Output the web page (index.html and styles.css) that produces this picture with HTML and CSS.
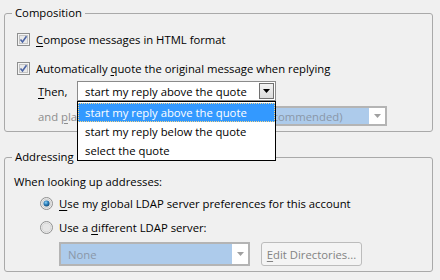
FILE: index.html
```html
<!DOCTYPE html>
<html>
    <head>
        <meta http-equiv="Content-Type" content="text/html; charset=utf-8"/>
        <link rel="stylesheet" href="styles.css">
    </head>
    <body>
        <div class="prefs">
            <fieldset class="group composition">
                <legend>Composition</legend>
                <div class="row check_row first_check">
                    <span class="checkbox">
                        <svg width="13" height="13" viewBox="0 0 13 13">
                            <rect x="0.5" y="0.5" width="12" height="12" fill="#f4f4f4" stroke="#8e8f8f"/>
                            <rect x="2.5" y="2.5" width="8" height="8" fill="#e9e9e9" stroke="#c3c3c3"/>
                            <path d="M3.5 6.5 L5.5 9 L9.5 3.2" fill="none" stroke="#4b64a4" stroke-width="1.6"/>
                        </svg>
                    </span>
                    <span><u>C</u>ompose messages in HTML format</span>
                </div>
                <div class="row check_row second_check">
                    <span class="checkbox">
                        <svg width="13" height="13" viewBox="0 0 13 13">
                            <rect x="0.5" y="0.5" width="12" height="12" fill="#f4f4f4" stroke="#8e8f8f"/>
                            <rect x="2.5" y="2.5" width="8" height="8" fill="#e9e9e9" stroke="#c3c3c3"/>
                            <path d="M3.5 6.5 L5.5 9 L9.5 3.2" fill="none" stroke="#4b64a4" stroke-width="1.6"/>
                        </svg>
                    </span>
                    <span>Automatically <u>q</u>uote the original message when replying</span>
                </div>
                <div class="row indent_row then_row">
                    <span class="then_label"><u>T</u>hen,</span>
                    <div class="select reply_select">
                        <span class="select_text">start my reply above the quote</span>
                        <span class="drop_btn">
                            <svg width="7" height="4" viewBox="0 0 7 4"><path d="M0 0 H7 L3.5 4 Z" fill="#000"/></svg>
                        </span>
                    </div>
                </div>
                <div class="row indent_row sig_row">
                    <span class="disabled_text">and <u>p</u>lace my signature</span>
                    <div class="select dim_select sig_select">
                        <span class="select_text">below my reply (recommended)</span>
                        <span class="dim_btn">
                            <svg width="7" height="4" viewBox="0 0 7 4"><path d="M0 0 H7 L3.5 4 Z" fill="#a0a0a0"/></svg>
                        </span>
                    </div>
                </div>
            </fieldset>

            <fieldset class="group addressing">
                <legend>Addressing</legend>
                <div class="row lookup_row">When looking up addresses:</div>
                <div class="row radio_row first_radio">
                    <span class="radio">
                        <svg width="13" height="13" viewBox="0 0 13 13">
                            <defs>
                                <radialGradient id="dot" cx="0.4" cy="0.35" r="0.7">
                                    <stop offset="0" stop-color="#8fd4f5"/>
                                    <stop offset="0.5" stop-color="#2a7dbb"/>
                                    <stop offset="1" stop-color="#12476f"/>
                                </radialGradient>
                            </defs>
                            <circle cx="6.5" cy="6.5" r="6" fill="#f2f2f2" stroke="#8e8f8f"/>
                            <circle cx="6.5" cy="6.5" r="4.5" fill="#e4e4e4" stroke="#cfcfcf"/>
                            <circle cx="6.5" cy="6.5" r="3" fill="url(#dot)"/>
                        </svg>
                    </span>
                    <span><u>U</u>se my global LDAP server preferences for this account</span>
                </div>
                <div class="row radio_row second_radio">
                    <span class="radio">
                        <svg width="13" height="13" viewBox="0 0 13 13">
                            <circle cx="6.5" cy="6.5" r="6" fill="#f2f2f2" stroke="#8e8f8f"/>
                            <circle cx="6.5" cy="6.5" r="4.5" fill="#e6e6e6" stroke="#d4d4d4"/>
                        </svg>
                    </span>
                    <span>Use a <u>d</u>ifferent LDAP server:</span>
                </div>
                <div class="row server_row">
                    <div class="select dim_select none_select">
                        <span class="select_text">None</span>
                        <span class="dim_btn">
                            <svg width="7" height="4" viewBox="0 0 7 4"><path d="M0 0 H7 L3.5 4 Z" fill="#a0a0a0"/></svg>
                        </span>
                    </div>
                    <div class="dim_button"><u>E</u>dit Directories...</div>
                </div>
            </fieldset>

            <div class="dropdown_list">
                <div class="option option_active">start my reply above the quote</div>
                <div class="option">start my reply below the quote</div>
                <div class="option">select the quote</div>
            </div>
        </div>
    </body>
</html>
```

FILE: styles.css
```css
html, body {
    margin: 0;
    padding: 0;
    background-color: #f0f0f0;
}

body {
    font-family: "Open Sans", "Noto Sans", sans-serif;
    font-size: 11.3px;
    color: #000;
    width: 440px;
    height: 280px;
    overflow: hidden;
}

u {
    text-decoration: underline;
    text-underline-offset: 2px;
}

.prefs {
    position: relative;
    padding-top: 5px;
}

.group {
    margin: 0 7px 0 4px;
    padding: 0 0 5px 7px;
    border: 1px solid #a9a9a9;
    border-radius: 3px;
    min-width: 0;
}

.group legend {
    padding: 0 3px;
    line-height: 16px;
    height: 16px;
}

.addressing {
    margin-top: 17px;
}

.row {
    display: flex;
    align-items: center;
    height: 20px;
}

/* composition rows */
.check_row {
    padding-left: 5px;
}
.first_check {
    margin-top: 8px;
}
.second_check {
    margin-top: 9px;
}
.checkbox {
    width: 13px;
    height: 13px;
    margin-right: 6px;
    display: flex;
}

.indent_row {
    padding-left: 26px;
}
.then_row {
    margin-top: 3px;
}
.sig_row {
    margin-top: 5px;
    margin-right: 45px;
}
.then_label {
    width: 39px;
}

.select {
    display: flex;
    align-items: center;
    box-sizing: border-box;
    height: 20px;
    background-color: #fff;
    border: 1px solid #8b8b8b;
}
.select_text {
    flex: 1;
    padding-left: 7px;
    white-space: nowrap;
    overflow: hidden;
}
.reply_select {
    width: 199px;
}
.drop_btn {
    box-sizing: border-box;
    width: 15px;
    height: 16px;
    margin-right: 1px;
    border: 1px solid #707070;
    background: linear-gradient(#f2f2f2, #dcdcdc);
    display: flex;
    align-items: center;
    justify-content: center;
}

.disabled_text {
    color: #8d8d8d;
    margin-right: 6px;
    white-space: nowrap;
}

.dim_select {
    border: 2px solid #b4b4b4;
    background-color: #adcbeb;
    color: #8a97a8;
}
.dim_btn {
    width: 16px;
    height: 100%;
    background-color: #fff;
    display: flex;
    align-items: center;
    justify-content: center;
}
.sig_select {
    flex: 1;
}

/* addressing rows */
.lookup_row {
    margin-top: 6px;
    padding-left: 2px;
}
.radio_row {
    padding-left: 28px;
}
.first_radio {
    margin-top: 2px;
}
.second_radio {
    margin-top: 4px;
}
.radio {
    width: 13px;
    height: 13px;
    margin-right: 6px;
    display: flex;
}

.server_row {
    margin-top: 5px;
    height: 24px;
    padding-left: 47px;
}
.none_select {
    width: 191px;
    height: 24px;
}
.dim_button {
    box-sizing: border-box;
    margin-left: 11px;
    width: 101px;
    height: 24px;
    border: 1px solid #bcbcbc;
    border-radius: 3px;
    background-color: #f4f4f4;
    color: #838383;
    display: flex;
    align-items: center;
    justify-content: center;
}

/* open popup of the reply select */
.dropdown_list {
    position: absolute;
    left: 77px;
    top: 101px;
    width: 199px;
    height: 60px;
    box-sizing: border-box;
    border: 1px solid #000;
    background-color: #fff;
    padding-top: 1px;
}
.option {
    box-sizing: border-box;
    height: 19px;
    line-height: 17px;
    padding-left: 6px;
    border: 1px solid transparent;
    white-space: nowrap;
}
.option_active {
    background-color: #3399ff;
    color: #fff;
    border: 1px dotted #f6d78a;
}
```
